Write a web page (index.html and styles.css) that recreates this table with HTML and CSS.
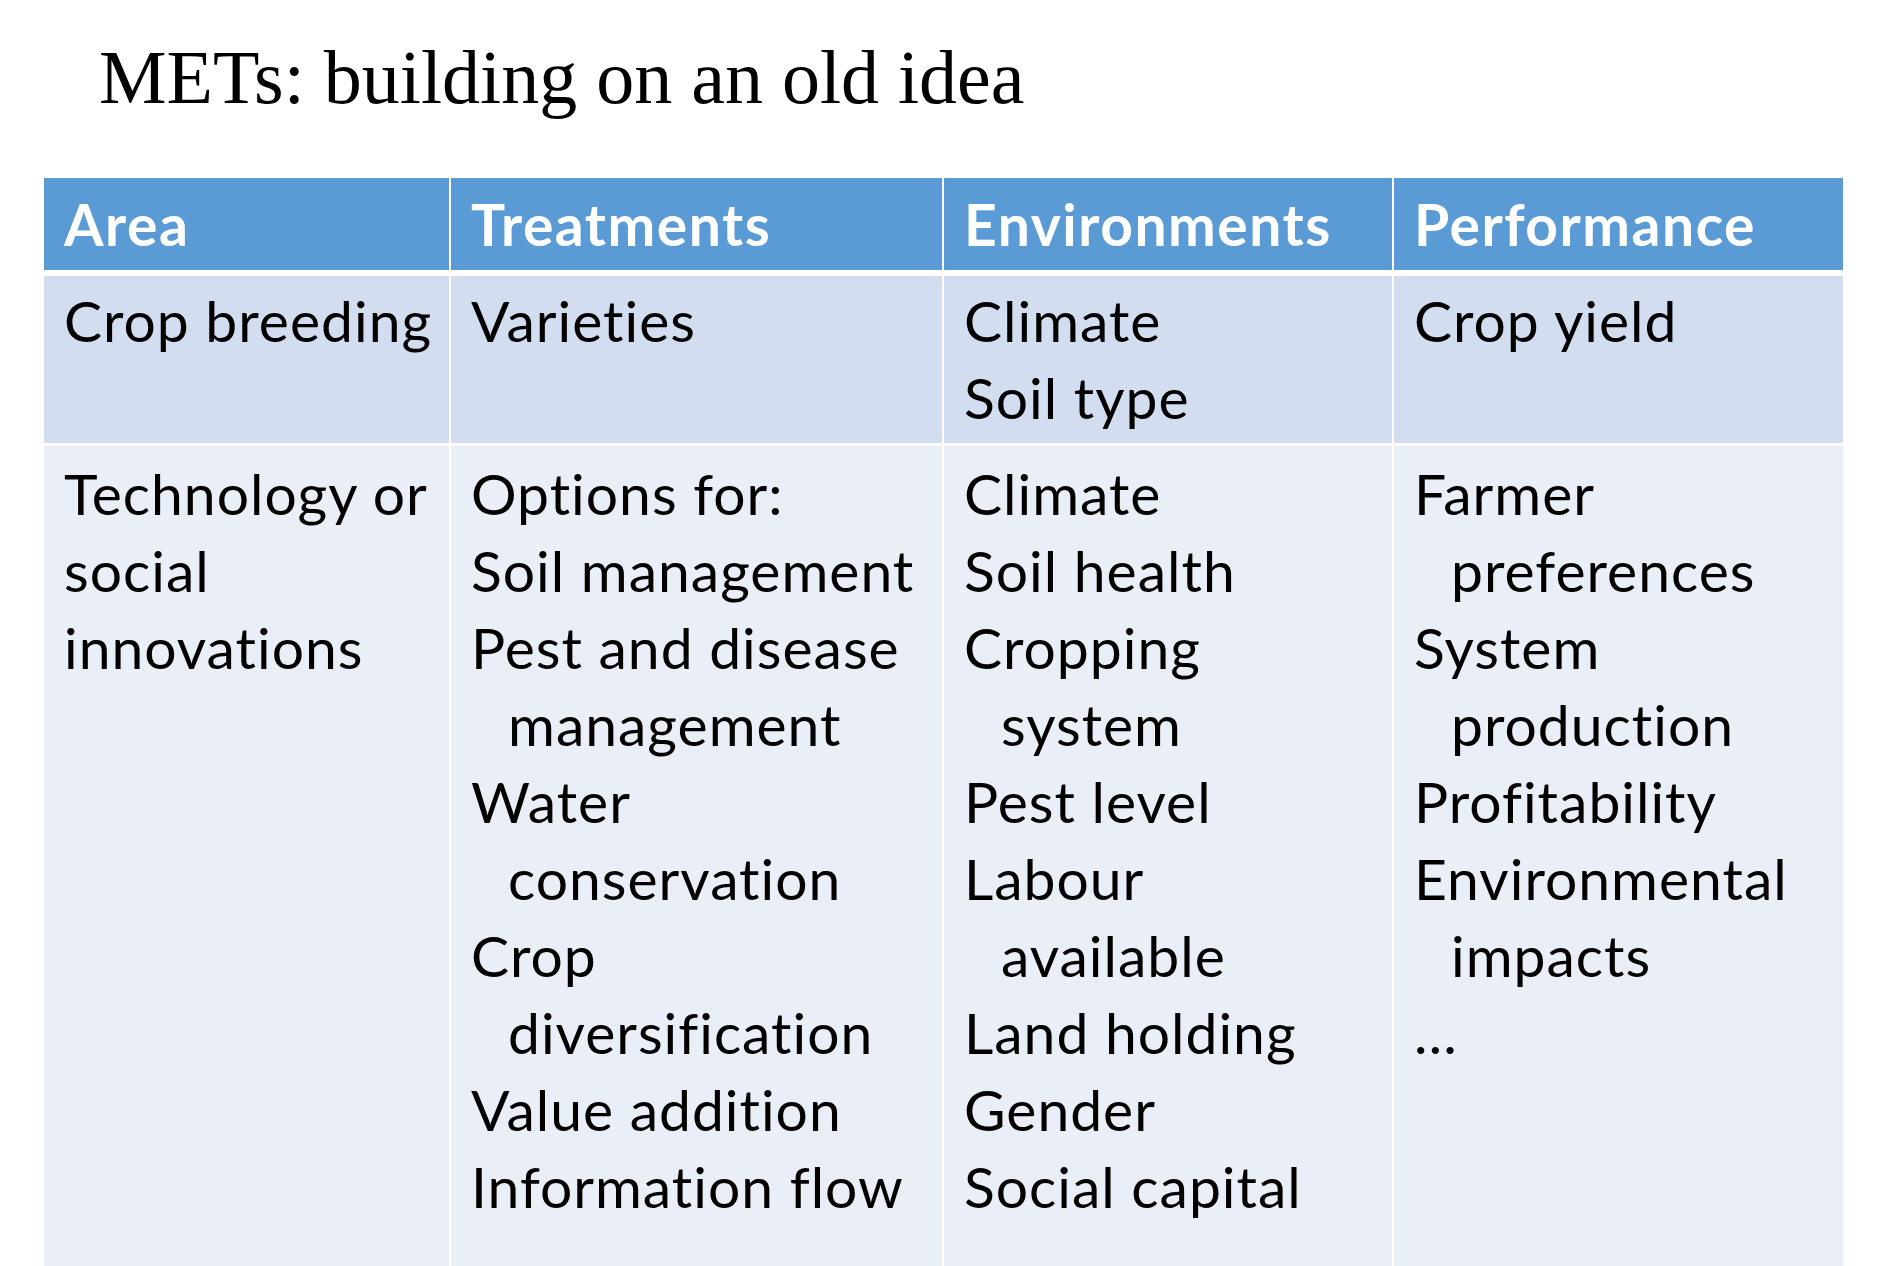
FILE: index.html
```html
<!DOCTYPE html>
<html lang="en">
<head>
<meta charset="utf-8">
<title>METs: building on an old idea</title>
<link rel="stylesheet" href="styles.css">
</head>
<body>
<div class="slide">
  <h1 class="title">METs: building on an old idea</h1>
  <div class="table">
    <div class="row head">
      <div class="cell">Area</div>
      <div class="cell">Treatments</div>
      <div class="cell">Environments</div>
      <div class="cell">Performance</div>
    </div>
    <div class="row band1">
      <div class="cell">
        <span class="ln">Crop breeding</span>
      </div>
      <div class="cell">
        <span class="ln">Varieties</span>
      </div>
      <div class="cell">
        <span class="ln">Climate</span>
        <span class="ln">Soil type</span>
      </div>
      <div class="cell">
        <span class="ln">Crop yield</span>
      </div>
    </div>
    <div class="row band2">
      <div class="cell">
        <span class="ln">Technology or</span>
        <span class="ln">social</span>
        <span class="ln">innovations</span>
      </div>
      <div class="cell">
        <span class="ln">Options for:</span>
        <span class="ln">Soil management</span>
        <span class="ln">Pest and disease</span>
        <span class="ln cont">management</span>
        <span class="ln">Water</span>
        <span class="ln cont">conservation</span>
        <span class="ln">Crop</span>
        <span class="ln cont">diversification</span>
        <span class="ln">Value addition</span>
        <span class="ln">Information flow</span>
      </div>
      <div class="cell">
        <span class="ln">Climate</span>
        <span class="ln">Soil health</span>
        <span class="ln">Cropping</span>
        <span class="ln cont">system</span>
        <span class="ln">Pest level</span>
        <span class="ln">Labour</span>
        <span class="ln cont">available</span>
        <span class="ln">Land holding</span>
        <span class="ln">Gender</span>
        <span class="ln">Social capital</span>
      </div>
      <div class="cell">
        <span class="ln">Farmer</span>
        <span class="ln cont">preferences</span>
        <span class="ln">System</span>
        <span class="ln cont">production</span>
        <span class="ln">Profitability</span>
        <span class="ln">Environmental</span>
        <span class="ln cont">impacts</span>
        <span class="ln">…</span>
      </div>
    </div>
  </div>
</div>
</body>
</html>
```

FILE: styles.css
```css
html, body {
  margin: 0;
  padding: 0;
  background: #ffffff;
  overflow: hidden;
}

.slide {
  width: 1900px;
  height: 1266px;
  overflow: hidden;
  padding: 33px 0 0 44px;
  box-sizing: border-box;
}

.title {
  margin: 0 0 57px 55px;
  font-family: "Liberation Serif", "Times New Roman", serif;
  font-weight: normal;
  font-size: 76px;
  line-height: 88px;
  color: #000000;
  white-space: nowrap;
}

.table {
  width: 1799px;
  background: #ffffff;
  font-family: Lato, "Noto Sans", sans-serif;
  font-size: 57px;
  line-height: 77px;
  letter-spacing: 1px;
  color: #000000;
}

.row {
  display: grid;
  grid-template-columns: 405px 491px 448px 449px;
  column-gap: 2px;
}

.cell {
  padding: 6px 0 7px 20px;
  white-space: nowrap;
}

.ln {
  display: block;
}

.cont {
  padding-left: 37px;
}

.head {
  margin-bottom: 6px;
}

.head .cell {
  background: #5b9bd5;
  color: #ffffff;
  font-weight: 700;
  letter-spacing: 1.5px;
  padding-top: 8px;
  padding-bottom: 7px;
}

.band1 {
  margin-bottom: 3px;
}

.band1 .cell {
  background: #d2deef;
}

.band2 .cell {
  background: #eaeff7;
  padding-top: 9px;
  padding-bottom: 120px;
}
```
